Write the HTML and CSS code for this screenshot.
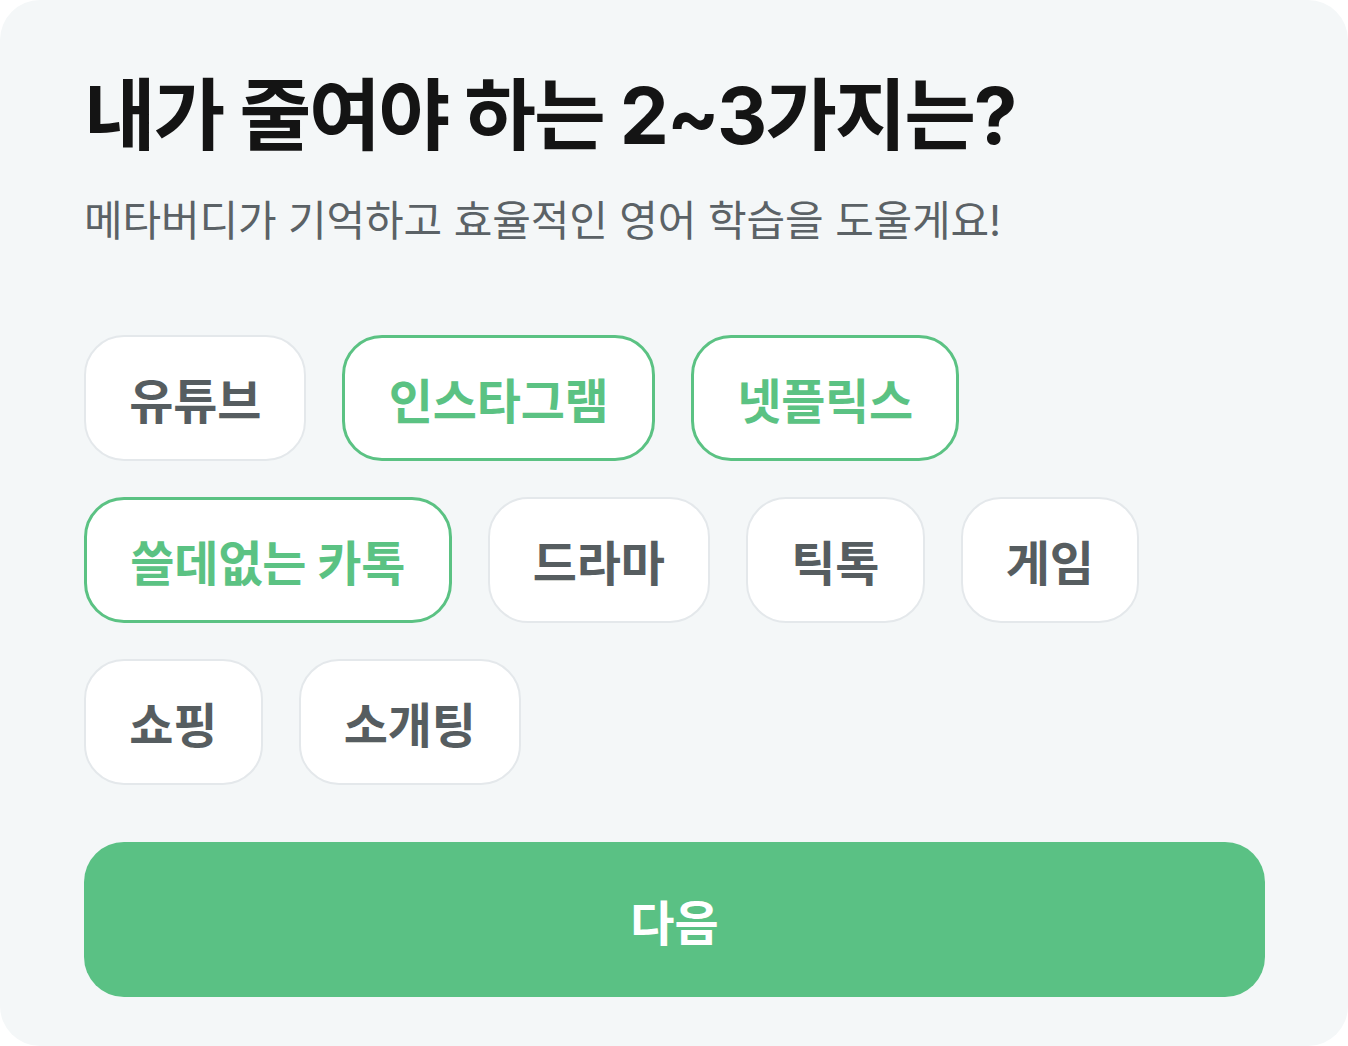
FILE: index.html
```html
<!DOCTYPE html>
<html lang="ko">
<head>
<meta charset="utf-8">
<link rel="stylesheet" href="styles.css">
</head>
<body>
<main class="card">
  <h1 class="title">내가 줄여야 하는 2~3가지는?</h1>
  <p class="subtitle">메타버디가 기억하고 효율적인 영어 학습을 도울게요!</p>
  <div class="chips">
    <div class="row">
      <button class="chip">유튜브</button>
      <button class="chip selected">인스타그램</button>
      <button class="chip selected">넷플릭스</button>
    </div>
    <div class="row">
      <button class="chip selected">쓸데없는 카톡</button>
      <button class="chip">드라마</button>
      <button class="chip">틱톡</button>
      <button class="chip">게임</button>
    </div>
    <div class="row">
      <button class="chip">쇼핑</button>
      <button class="chip">소개팅</button>
    </div>
  </div>
  <button class="next">다음</button>
</main>
</body>
</html>
```
FILE: styles.css
```css
html, body {
  margin: 0;
  padding: 0;
  background: #ffffff;
}
body {
  font-family: Inter, "Noto Sans CJK KR", "Noto Sans", sans-serif;
}
.card {
  box-sizing: border-box;
  width: 1348px;
  height: 1046px;
  background: #f4f7f8;
  border-radius: 40px;
  padding: 68px 83px 0 84px;
  display: flex;
  flex-direction: column;
}
.title {
  margin: 0;
  font-size: 78px;
  line-height: 96px;
  font-weight: 700;
  color: #141414;
  letter-spacing: -2.2px;
}
.subtitle {
  margin: 27px 0 0;
  font-size: 42px;
  line-height: 60px;
  font-weight: 400;
  color: #5b6266;
  letter-spacing: -0.15px;
}
.chips {
  margin-top: 84px;
  display: flex;
  flex-direction: column;
  gap: 36px;
}
.row {
  display: flex;
  gap: 36px;
}
.chip {
  box-sizing: border-box;
  height: 126px;
  padding: 0 43.3px;
  border: 2px solid #e4e8eb;
  border-radius: 40px;
  background: #ffffff;
  font-family: inherit;
  font-size: 48px;
  font-weight: 700;
  color: #565d60;
  letter-spacing: -0.2px;
}
.chip.selected {
  border: 3px solid #5bc283;
  color: #5bc283;
}
.next {
  margin-top: 57px;
  height: 155px;
  border: none;
  border-radius: 40px;
  background: #5ac184;
  color: #ffffff;
  font-family: inherit;
  font-size: 48px;
  font-weight: 700;
  letter-spacing: 0;
}
```
